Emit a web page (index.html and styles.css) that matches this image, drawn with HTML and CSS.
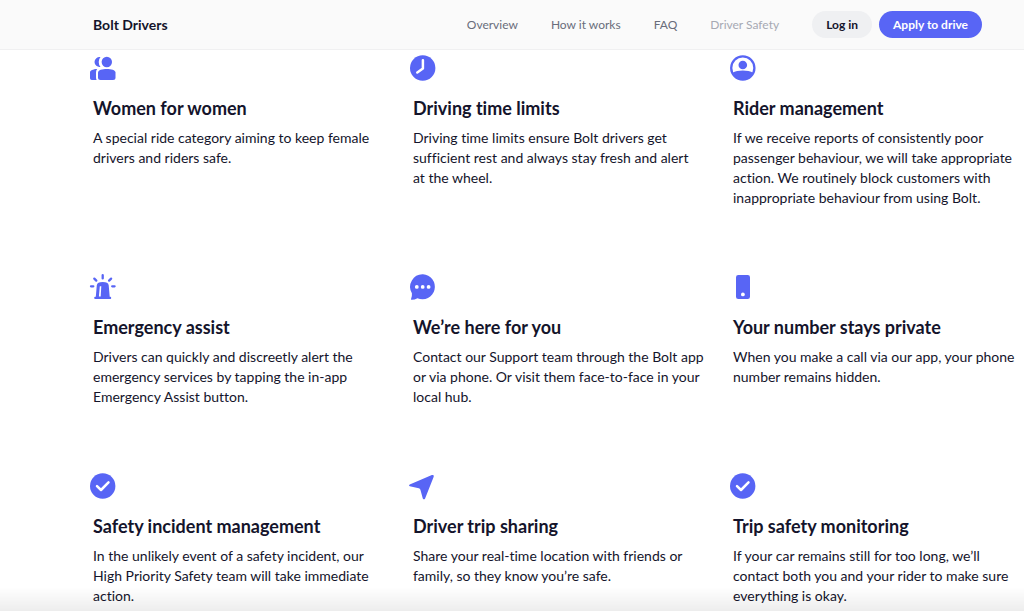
FILE: index.html
```html
<!DOCTYPE html>
<html lang="en">

<head>
    <meta charset="UTF-8">
    <meta name="viewport" content="width=device-width, initial-scale=1.0">
    <title>Bolt Drivers</title>

    <link rel="stylesheet" href="styles.css">
</head>

<body>
    <header class="header">
        <a class="brand" href="#">Bolt Drivers</a>
        <nav class="nav">
            <a href="#overview">Overview</a>
            <a href="#how">How it works</a>
            <a href="#faq">FAQ</a>
            <a class="active" href="#safety">Driver Safety</a>
        </nav>
        <div class="actions">
            <button class="button" type="button">Log in</button>
            <button class="button primary" type="button">Apply to drive</button>
        </div>
    </header>

    <main class="features" id="safety">
        <section class="feature">
            <svg class="icon" viewBox="0 0 26 26">
                <path d="M10.5 2.1A5 5 0 1 0 10.5 11.9A7.6 7.6 0 0 1 10.5 2.1Z" />
                <circle cx="16.8" cy="7" r="5.2" />
                <path d="M7.2 14C3 14.2 0 15.4 0 17.5V23.2Q0 25 1.8 25H6.7Q6 24 6 22.5V17.5Q6 15.3 7.2 14Z" />
                <path d="M8 17.5C8 12.9 25.5 12.9 25.5 17.5V22.5Q25.5 25 23 25H10.5Q8 25 8 22.5Z" />
            </svg>
            <h2>Women for women</h2>
            <p>A special ride category aiming to keep female<br>drivers and riders safe.</p>
        </section>
        <section class="feature">
            <svg class="icon" viewBox="0 0 26 26">
                <circle cx="12.7" cy="13" r="12.7" />
                <path class="line" d="M12.9 5.2V13.4L7.3 17.4" />
            </svg>
            <h2>Driving time limits</h2>
            <p>Driving time limits ensure Bolt drivers get<br>sufficient rest and always stay fresh and alert<br>at the wheel.</p>
        </section>
        <section class="feature">
            <svg class="icon" viewBox="0 0 26 26">
                <circle class="ring" cx="12.8" cy="13" r="11.6" />
                <circle cx="12.8" cy="10" r="4.3" />
                <path d="M2.2 18C8 14.8 17.6 14.8 23.4 18A11.6 11.6 0 0 1 2.2 18Z" />
            </svg>
            <h2>Rider management</h2>
            <p>If we receive reports of consistently poor<br>passenger behaviour, we will take appropriate<br>action. We routinely block customers with<br>inappropriate behaviour from using Bolt.</p>
        </section>
        <section class="feature">
            <svg class="icon" viewBox="0 0 26 26">
                <path class="rays" d="M12.7 1.2V4.4M4.3 4.6L6.3 6.6M21.1 4.6L19.1 6.6M1 12.3H3.3M22.2 12.3H24.6" />
                <path fill-rule="evenodd" d="M5.8 22.8L6.8 11.2Q7.2 8 12.7 8Q18.3 8 18.7 11.2L19.7 22.8H20.3Q21.2 22.8 21.2 24T20.3 25.1H5.1Q4.2 25.1 4.2 24T5.1 22.8ZM8.9 22.5H10.7L11.3 12.3H9.8Z" />
            </svg>
            <h2>Emergency assist</h2>
            <p>Drivers can quickly and discreetly alert the<br>emergency services by tapping the in-app<br>Emergency Assist button.</p>
        </section>
        <section class="feature">
            <svg class="icon" viewBox="0 0 26 26">
                <path d="M13 .3A12.4 12.5 0 1 1 7.4 24.2Q4.5 25.8 1.5 25.7Q.7 25.6 1.1 24.8Q2.2 22.7 1.9 19.2A12.4 12.5 0 0 1 13 .3Z" />
                <circle class="dot" cx="6.8" cy="12.9" r="1.9" />
                <circle class="dot" cx="12.7" cy="12.9" r="1.9" />
                <circle class="dot" cx="18.6" cy="12.9" r="1.9" />
            </svg>
            <h2>We’re here for you</h2>
            <p>Contact our Support team through the Bolt app<br>or via phone. Or visit them face-to-face in your<br>local hub.</p>
        </section>
        <section class="feature">
            <svg class="icon" viewBox="0 0 26 26">
                <rect x="6" y="1" width="14" height="24" rx="2.3" />
                <circle class="dot" cx="12.9" cy="20.4" r="1.9" />
            </svg>
            <h2>Your number stays private</h2>
            <p>When you make a call via our app, your phone<br>number remains hidden.</p>
        </section>
        <section class="feature">
            <svg class="icon" viewBox="0 0 26 26">
                <circle cx="12.7" cy="13" r="12.7" />
                <path class="line" d="M7 13.2L11 17L18.5 9.4" />
            </svg>
            <h2>Safety incident management</h2>
            <p>In the unlikely event of a safety incident, our<br>High Priority Safety team will take immediate<br>action.</p>
        </section>
        <section class="feature">
            <svg class="icon" viewBox="0 0 26 26">
                <path d="M-.3 11.4L21.9 2.1Q24.4 1.3 23.7 3.8L15.1 25.4Q14 27.3 12.8 25.4L10.4 16.7Q10 15.5 8.8 15.2L-.2 13.2Q-1.9 12.3-.3 11.4Z" />
            </svg>
            <h2>Driver trip sharing</h2>
            <p>Share your real-time location with friends or<br>family, so they know you’re safe.</p>
        </section>
        <section class="feature">
            <svg class="icon" viewBox="0 0 26 26">
                <circle cx="12.7" cy="13" r="12.7" />
                <path class="line" d="M7 13.2L11 17L18.5 9.4" />
            </svg>
            <h2>Trip safety monitoring</h2>
            <p>If your car remains still for too long, we’ll<br>contact both you and your rider to make sure<br>everything is okay.</p>
        </section>
    </main>

    <div class="fade"></div>
</body>

</html>
```
FILE: styles.css
```css
* {
    box-sizing: border-box;
    margin: 0;
    padding: 0;
}

body {
    background-color: #ffffff;
    color: #14142b;
    font-family: Lato, "Liberation Sans", sans-serif;
    font-size: 14px;
    font-variant-ligatures: none;
    line-height: 20px;
}

a {
    color: inherit;
    text-decoration: none;
}

.header {
    position: sticky;
    top: 0;
    z-index: 1;
    display: flex;
    align-items: center;
    height: 50px;
    padding: 0 42px 0 93px;
    background-color: #fafafa;
    border-bottom: 1px solid #f0f0f1;
    white-space: nowrap;
}

.brand {
    font-size: 14px;
    font-weight: 700;
}

.nav {
    display: flex;
    gap: 33px;
    margin-left: auto;
    color: #696d7b;
    font-size: 12px;
}

.nav .active {
    color: #a6a9b3;
}

.actions {
    display: flex;
    gap: 7px;
    margin-left: 33px;
}

.button {
    height: 27px;
    padding: 0 14px;
    border: 0;
    border-radius: 14px;
    background-color: #eff0f2;
    color: #14142b;
    cursor: pointer;
    font-family: inherit;
    font-size: 12px;
    font-weight: 700;
}

.button.primary {
    background-color: #5865f5;
    color: #ffffff;
}

.features {
    display: grid;
    grid-template-columns: repeat(3, 1fr);
    gap: 66px 29px;
    padding: 5px 0 6px 93px;
}

.feature {
    min-width: 0;
    white-space: nowrap;
}

.icon {
    display: block;
    width: 26px;
    height: 26px;
    margin: 0 0 15px -3px;
    overflow: visible;
    fill: #5865f5;
}

.icon .line {
    fill: none;
    stroke: #ffffff;
    stroke-width: 2.5;
    stroke-linecap: round;
    stroke-linejoin: round;
}

.icon .ring,
.icon .rays {
    fill: none;
    stroke: #5865f5;
    stroke-width: 2.3;
    stroke-linecap: round;
}

.icon .dot {
    fill: #ffffff;
}

.feature h2 {
    margin-bottom: 8px;
    font-size: 18px;
    font-weight: 700;
    line-height: 24px;
}

/* shade along the bottom of the window */
.fade {
    position: fixed;
    right: 0;
    bottom: 0;
    left: 0;
    height: 24px;
    background: linear-gradient(rgba(0, 0, 0, 0), rgba(0, 0, 0, 0.07));
    pointer-events: none;
}
```
